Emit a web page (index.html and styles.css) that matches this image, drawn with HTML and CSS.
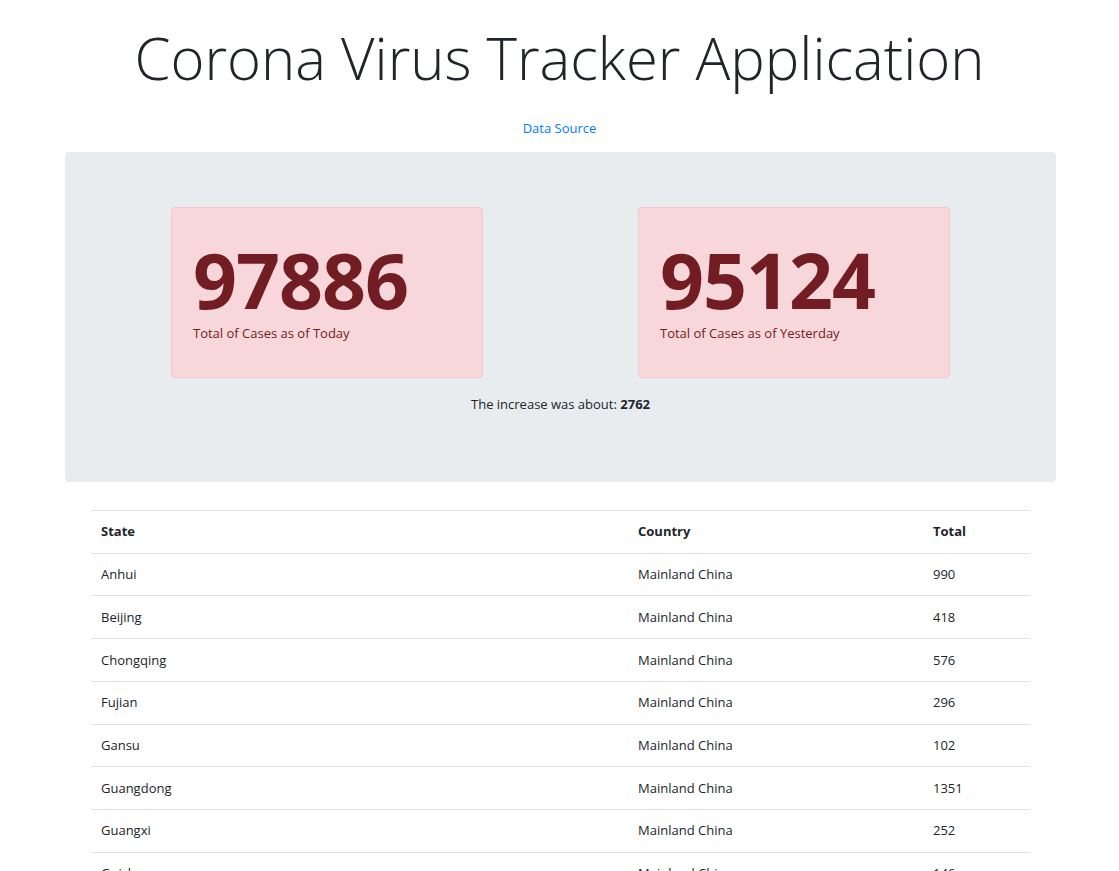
FILE: index.html
```html
<!DOCTYPE html>
<html>
<head>
<meta charset="utf-8">
<link rel="stylesheet" href="styles.css">
</head>
<body>
<header class="top">
  <h1 class="title">Corona Virus Tracker Application</h1>
  <a class="source" href="#">Data Source</a>
</header>
<section class="jumbo">
  <div class="cards">
    <div class="card">
      <div class="num">97886</div>
      <div class="label">Total of Cases as of Today</div>
    </div>
    <div class="card">
      <div class="num">95124</div>
      <div class="label">Total of Cases as of Yesterday</div>
    </div>
  </div>
  <p class="increase">The increase was about: <b>2762</b></p>
</section>
<table class="tbl">
  <thead>
    <tr><th class="c1">State</th><th class="c2">Country</th><th class="c3">Total</th></tr>
  </thead>
  <tbody>
    <tr><td>Anhui</td><td>Mainland China</td><td>990</td></tr>
    <tr><td>Beijing</td><td>Mainland China</td><td>418</td></tr>
    <tr><td>Chongqing</td><td>Mainland China</td><td>576</td></tr>
    <tr><td>Fujian</td><td>Mainland China</td><td>296</td></tr>
    <tr><td>Gansu</td><td>Mainland China</td><td>102</td></tr>
    <tr><td>Guangdong</td><td>Mainland China</td><td>1351</td></tr>
    <tr><td>Guangxi</td><td>Mainland China</td><td>252</td></tr>
    <tr><td>Guizhou</td><td>Mainland China</td><td>146</td></tr>
    <tr><td>Hainan</td><td>Mainland China</td><td>168</td></tr>
    <tr><td>Hebei</td><td>Mainland China</td><td>318</td></tr>
  </tbody>
</table>
</body>
</html>
```
FILE: styles.css
```css
html, body {
  margin: 0;
  padding: 0;
  background: #fff;
}
body {
  font-family: "Open Sans", "Noto Sans", sans-serif;
  font-size: 13px;
  line-height: 1.5;
  color: #212529;
}
.top {
  display: flex;
  flex-direction: column;
  align-items: center;
  padding-top: 23px;
}
.title {
  margin: 0;
  font-size: 58px;
  font-weight: 300;
  line-height: 1.2;
  color: #212529;
}
.source {
  margin-top: 26px;
  color: #007bff;
  text-decoration: none;
  font-size: 13px;
}
.jumbo {
  margin: 14px 63px 0 65px;
  background: #e9ecef;
  border-radius: 4px;
  padding: 55px 0 58px;
  height: 330px;
  box-sizing: border-box;
}
.cards {
  display: flex;
  justify-content: center;
  gap: 155px;
}
.card {
  width: 312px;
  height: 171px;
  box-sizing: border-box;
  background: #f8d7da;
  border: 1px solid #f5c6cb;
  border-radius: 4px;
  color: #721c24;
  padding: 36.5px 21px 0;
}
.num {
  font-size: 77px;
  font-weight: 700;
  line-height: 70px;
  letter-spacing: -1px;
}
.label {
  margin-top: 9.5px;
  font-size: 13px;
}
.increase {
  margin: 17px 0 0;
  text-align: center;
  font-size: 13px;
}
.increase b {
  font-weight: 700;
}
.tbl {
  margin: 28px 0 0 91px;
  width: 939px;
  border-collapse: collapse;
}
.tbl th, .tbl td {
  text-align: left;
  padding: 10.35px 10px;
  border-top: 1px solid #dee2e6;
  line-height: 21px;
  font-size: 13px;
  vertical-align: top;
}
.tbl th {
  font-weight: 700;
}
.tbl .c1 { width: 517px; }
.tbl .c2 { width: 275px; }
.tbl .c3 { width: 87px; }
```
